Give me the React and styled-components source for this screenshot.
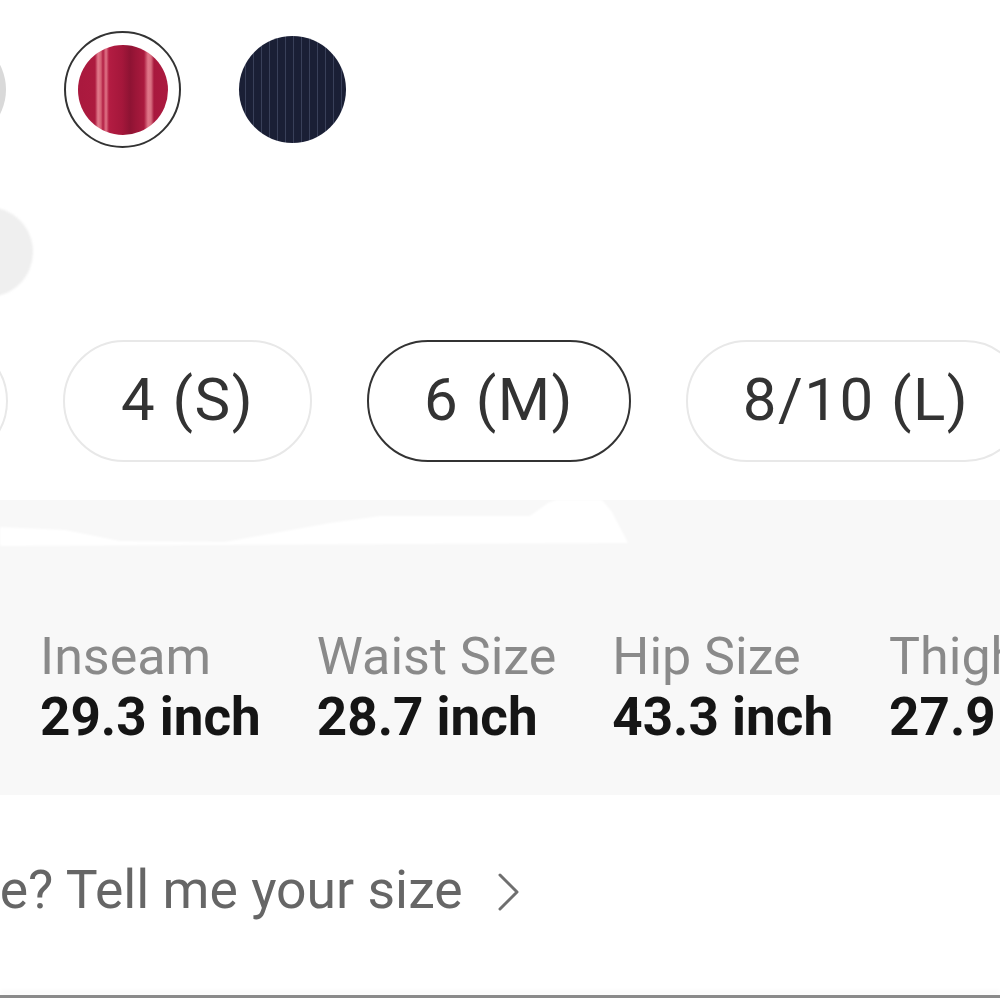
import styled, { createGlobalStyle } from "styled-components";

const GlobalStyle = createGlobalStyle`
  body {
    margin: 0;
    background: #ffffff;
    overflow: hidden;
    font-family: Roboto, "Liberation Sans", sans-serif;
  }
`;

const PATTERNS = {
  grey: "#d9d9d9",
  red: `linear-gradient(90deg,
    #a9193e 0px, #ad1a3f 17px,
    #e27a8c 20px, #d45f74 23px, #b21d43 25px,
    #e07487 28px, #b31c42 31px,
    #a5173b 44px, #8e1333 52px, #9c1638 58px,
    #aa1a3e 66px, #e07789 70px, #d86e80 73px,
    #a8183d 76px, #ab1a3f 90px)`,
  navy: `repeating-linear-gradient(90deg,
    #1a1f35 0px, #1a1f35 6px, #394059 6px, #394059 7px, #1a1f35 7px, #1a1f35 8px)`,
};

const swatches = [
  { id: "grey", size: 107 },
  { id: "red", size: 90, selected: true },
  { id: "navy", size: 107 },
];

const sizes = [
  { label: "2 (XS)", width: 270 },
  { label: "4 (S)", width: 249 },
  { label: "6 (M)", width: 264, selected: true },
  { label: "8/10 (L)", width: 340 },
];

const measures = [
  { label: "Inseam", value: "29.3 inch" },
  { label: "Waist Size", value: "28.7 inch" },
  { label: "Hip Size", value: "43.3 inch" },
  { label: "Thigh", value: "27.9 inch" },
];

const App = () => {
  return (
    <>
      <GlobalStyle />
      <SPage>
        <SSwatchRow>
          {swatches.map((s) => (
            <SSwatchSlot key={s.id} selected={s.selected}>
              <SSwatch $pattern={PATTERNS[s.id]} $size={s.size} />
            </SSwatchSlot>
          ))}
        </SSwatchRow>

        <SGhostDot />

        <SSizeRow>
          {sizes.map((s) => (
            <SPill key={s.label} $width={s.width} $selected={s.selected}>
              {s.label}
            </SPill>
          ))}
        </SSizeRow>

        <SPanel>
          <SWedge viewBox="0 0 640 46" width="640" height="46">
            <polygon
              points="0,27 65,30 120,41 225,42 330,23 380,16 530,16 548,3 556,0 602,0 612,12 628,43 0,46"
              fill="#ffffff"
            />
          </SWedge>
          {measures.map((m) => (
            <SMeasure key={m.label}>
              <SMeasureLabel>{m.label}</SMeasureLabel>
              <SMeasureValue>{m.value}</SMeasureValue>
            </SMeasure>
          ))}
        </SPanel>

        <SHint>
          <span>size? Tell me your size</span>
          <SChevron viewBox="0 0 24 38" width="24" height="38">
            <polyline
              points="3,2 20,19 3,36"
              fill="none"
              stroke="#6f6f6f"
              strokeWidth="3"
              strokeLinecap="round"
              strokeLinejoin="round"
            />
          </SChevron>
        </SHint>

        <SBottomRule />
      </SPage>
    </>
  );
};

const SPage = styled.div`
  width: 1000px;
  height: 998px;
  overflow: hidden;
  display: flex;
  flex-direction: column;
  background: #ffffff;
`;

const SSwatchRow = styled.div`
  display: flex;
  align-items: center;
  gap: 53px;
  margin: 31px 0 0 -106px;
`;

const SSwatchSlot = styled.div`
  width: 117px;
  height: 117px;
  flex-shrink: 0;
  box-sizing: border-box;
  border-radius: 50%;
  border: 2px solid ${(props) => (props.selected ? "#333333" : "transparent")};
  display: flex;
  align-items: center;
  justify-content: center;
`;

const SSwatch = styled.div`
  width: ${(props) => props.$size}px;
  height: ${(props) => props.$size}px;
  border-radius: 50%;
  background: ${(props) => props.$pattern};
`;

const SGhostDot = styled.div`
  width: 90px;
  height: 90px;
  margin: 59px 0 0 -57px;
  border-radius: 50%;
  background: #efefef;
  filter: blur(1px);
`;

const SSizeRow = styled.div`
  display: flex;
  gap: 55px;
  margin: 43px 0 0 -262px;
`;

const SPill = styled.div`
  width: ${(props) => props.$width}px;
  height: 122px;
  flex-shrink: 0;
  box-sizing: border-box;
  border-radius: 61px;
  border: 2px solid ${(props) => (props.$selected ? "#333333" : "#e8e8e8")};
  display: flex;
  align-items: center;
  justify-content: center;
  padding-bottom: 4px;
  font-size: 60px;
  letter-spacing: 1.5px;
  color: #333333;
  white-space: nowrap;
`;

const SPanel = styled.div`
  position: relative;
  margin-top: 38px;
  height: 295px;
  box-sizing: border-box;
  padding: 127px 0 0 40px;
  background: #f8f8f8;
  display: flex;
  gap: 56px;
`;

const SWedge = styled.svg`
  position: absolute;
  top: 0;
  left: 0;
  filter: blur(1px);
`;

const SMeasure = styled.div`
  position: relative;
  display: flex;
  flex-direction: column;
  flex-shrink: 0;
  white-space: nowrap;
`;

const SMeasureLabel = styled.div`
  font-size: 52px;
  line-height: 60px;
  color: #8a8a8a;
`;

const SMeasureValue = styled.div`
  font-size: 53px;
  line-height: 60px;
  font-weight: 700;
  color: #151515;
`;

const SHint = styled.div`
  display: flex;
  align-items: center;
  gap: 34px;
  margin: 64px 0 0 -67px;
  font-size: 53.5px;
  line-height: 62px;
  color: #666666;
  white-space: nowrap;
`;

const SChevron = styled.svg`
  flex-shrink: 0;
  margin-top: 4px;
`;

const SBottomRule = styled.div`
  margin-top: auto;
  height: 3px;
  background: #8a8a8a;
  box-shadow: 0 -4px 5px rgba(0, 0, 0, 0.04);
`;

export default App;
